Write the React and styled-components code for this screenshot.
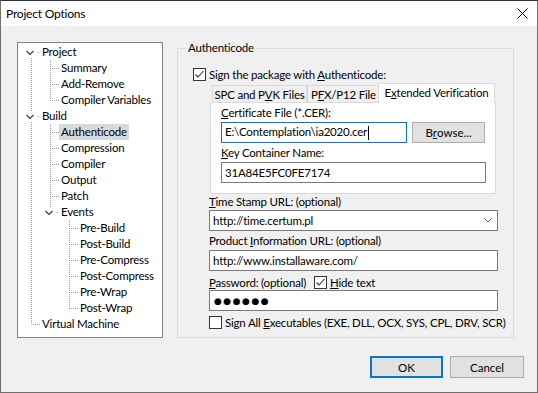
import React from 'react';
import styled, { createGlobalStyle, css } from 'styled-components';

const Global = createGlobalStyle`
  html, body { margin: 0; padding: 0; background: #f0f0f0; }
  body { font-family: Lato, "Noto Sans", sans-serif; font-size: 11.5px; letter-spacing: -0.2px; color: #000; }
  * { box-sizing: border-box; }
`;

const Window = styled.div`
  width: 538px;
  height: 393px;
  border: 1px solid #6e6e6e;
  border-top-color: #2f3040;
  background: #f0f0f0;
  display: flex;
  flex-direction: column;
`;

const TitleBar = styled.div`
  height: 25px;
  flex: none;
  background: #fff;
  display: flex;
  align-items: center;
  justify-content: space-between;
  padding: 0 9px 0 5px;
  font-size: 12px;
`;

const Body = styled.div`
  flex: 1;
  display: flex;
  flex-direction: column;
  padding: 14px 13px 14px 16px;
`;

const TopRow = styled.div`
  display: flex;
  align-items: flex-start;
  gap: 14px;
`;

/* ---------- tree ---------- */
const Tree = styled.div`
  margin-top: 2px;
  width: 146px;
  height: 296px;
  background: #fff;
  border: 1px solid #828282;
  padding-top: 1px;
`;

const TreeRow = styled.div`
  height: 16px;
  display: flex;
  align-items: center;
  padding-left: 3px;
`;

const dotsV = 'repeating-linear-gradient(to bottom, #a0a0a0 0 1px, transparent 1px 2px)';
const dotsH = 'repeating-linear-gradient(to right, #a0a0a0 0 1px, transparent 1px 2px)';

const Guide = styled.span`
  position: relative;
  flex: none;
  width: 19px;
  height: 16px;
  &::before {
    content: '';
    position: absolute;
    left: 10px;
    width: 1px;
    background: ${dotsV};
    ${({ $kind }) => {
      switch ($kind) {
        case 'I':
        case 'T':
        case 'cm':
          return css`top: 0; bottom: 0;`;
        case 'L':
        case 'ce':
          return css`top: 0; height: 9px;`;
        case 'cs':
          return css`top: 8px; bottom: 0;`;
        default:
          return css`display: none;`;
      }
    }}
  }
  &::after {
    content: '';
    position: absolute;
    top: 8px;
    height: 1px;
    background: ${dotsH};
    ${({ $kind }) => {
      switch ($kind) {
        case 'T':
        case 'L':
          return css`left: 10px; width: 9px;`;
        case 'cs':
        case 'cm':
        case 'ce':
          return css`left: 17px; width: 1px;`;
        default:
          return css`display: none;`;
      }
    }}
  }
`;

const ChevronIcon = styled.svg`
  position: absolute;
  left: 4px;
  top: 4px;
  z-index: 1;
`;

const TreeLabel = styled.span`
  height: 16px;
  line-height: 16px;
  padding: 0 2px;
  white-space: nowrap;
  color: #000;
  background: ${({ $selected }) => ($selected ? '#d9d9d9' : 'transparent')};
`;

const treeRows = [
  { g: ['cs'], t: 'Project' },
  { g: ['I', 'T'], t: 'Summary' },
  { g: ['I', 'T'], t: 'Add-Remove' },
  { g: ['I', 'L'], t: 'Compiler Variables' },
  { g: ['cm'], t: 'Build' },
  { g: ['I', 'T'], t: 'Authenticode', sel: true },
  { g: ['I', 'T'], t: 'Compression' },
  { g: ['I', 'T'], t: 'Compiler' },
  { g: ['I', 'T'], t: 'Output' },
  { g: ['I', 'T'], t: 'Patch' },
  { g: ['I', 'ce'], t: 'Events' },
  { g: ['I', ' ', 'T'], t: 'Pre-Build' },
  { g: ['I', ' ', 'T'], t: 'Post-Build' },
  { g: ['I', ' ', 'T'], t: 'Pre-Compress' },
  { g: ['I', ' ', 'T'], t: 'Post-Compress' },
  { g: ['I', ' ', 'T'], t: 'Pre-Wrap' },
  { g: ['I', ' ', 'L'], t: 'Post-Wrap' },
  { g: ['L'], t: 'Virtual Machine' },
];

const Chevron = () => (
  <ChevronIcon width="10" height="9" viewBox="0 0 10 9">
    <rect x="0" y="0" width="10" height="9" fill="#fff" />
    <polyline points="1.5,3 5,6.5 8.5,3" fill="none" stroke="#3c3c3c" strokeWidth="1.2" />
  </ChevronIcon>
);

/* ---------- group ---------- */
const Group = styled.fieldset`
  margin: 0;
  padding: 0;
  min-width: 0;
  width: 337px;
  border: 1px solid #dcdcdc;
`;

const Legend = styled.legend`
  margin-left: 8px;
  padding: 0 2px;
  line-height: 16px;
`;

const GroupBody = styled.div`
  padding: 10px 0 7px 15px;
`;

const CheckRow = styled.div`
  display: flex;
  align-items: center;
  height: 16px;
  gap: 3px;
  margin-top: ${({ $mt }) => $mt || 0}px;
  white-space: nowrap;
`;

const Box = styled.span`
  flex: none;
  width: 13px;
  height: 13px;
  border: 1px solid #333;
  background: #fff;
  display: inline-flex;
  align-items: center;
  justify-content: center;
`;

const CheckBox = ({ checked }) => (
  <Box>
    {checked && (
      <svg width="11" height="11" viewBox="0 0 11 11">
        <polyline points="1.5,5.5 4,8 9.5,2" fill="none" stroke="#333" strokeWidth="1.1" />
      </svg>
    )}
  </Box>
);

const Fields = styled.div`
  margin-left: 16px;
  width: 289px;
  display: flex;
  flex-direction: column;
`;

const TabControl = styled.div`
  margin-top: 1px;
  margin-left: 1px;
  width: 286px;
`;

const TabStrip = styled.div`
  display: flex;
  align-items: flex-end;
  height: 20px;
  padding-left: 2px;
`;

const Tab = styled.div`
  flex: none;
  width: ${({ $w }) => $w}px;
  height: ${({ $active }) => ($active ? 20 : 18)}px;
  margin-left: ${({ $active }) => ($active ? -2 : 0)}px;
  border: 1px solid #d9d9d9;
  border-bottom: none;
  background: ${({ $active }) => ($active ? '#fff' : '#f0f0f0')};
  position: relative;
  z-index: ${({ $active }) => ($active ? 2 : 0)};
  display: flex;
  align-items: center;
  justify-content: center;
  white-space: nowrap;
  padding-bottom: ${({ $active }) => ($active ? 2 : 0)}px;
`;

const TabPanel = styled.div`
  position: relative;
  z-index: 1;
  margin-top: -1px;
  height: 92px;
  border: 1px solid #d9d9d9;
  background: #fff;
  padding: 2px 9px 10px 10px;
  display: flex;
  flex-direction: column;
`;

const FieldLabel = styled.div`
  height: 16px;
  line-height: 16px;
  margin-top: ${({ $mt }) => $mt || 0}px;
  margin-bottom: ${({ $mb }) => $mb || 0}px;
  white-space: nowrap;
`;

const InputRow = styled.div`
  display: flex;
  gap: 5px;
`;

const TextBox = styled.div`
  height: 21px;
  width: ${({ $w }) => ($w ? `${$w}px` : '100%')};
  flex: none;
  border: 1px solid ${({ $focused }) => ($focused ? '#0078d7' : '#7a7a7a')};
  background: #fff;
  display: flex;
  align-items: center;
  justify-content: space-between;
  padding: 0 5px 0 3px;
  white-space: nowrap;
  overflow: hidden;
`;

const Caret = styled.span`
  display: inline-block;
  width: 1px;
  height: 14px;
  background: #000;
  margin-left: 1px;
  vertical-align: middle;
`;

const Dots = styled.span`
  font-family: "DejaVu Sans", sans-serif;
  font-size: 9px;
  letter-spacing: 1.5px;
  margin-left: 1px;
`;

const Button = styled.button`
  font: inherit;
  color: #000;
  height: ${({ $h }) => $h || 22}px;
  width: ${({ $w }) => $w}px;
  background: #e1e1e1;
  border: ${({ $primary }) => ($primary ? '2px solid #0078d7' : '1px solid #adadad')};
  padding: 0;
  flex: none;
  display: flex;
  align-items: center;
  justify-content: center;
`;

const U = styled.u`
  text-decoration-thickness: 1px;
  text-underline-offset: 1px;
`;

const HideLabel = styled.span`
  margin-right: 5px;
`;

const ButtonRow = styled.div`
  margin-top: 18px;
  display: flex;
  justify-content: flex-end;
  gap: 7px;
`;

export default function App() {
  return (
    <>
      <Global />
      <Window>
        <TitleBar>
          <span>Project Options</span>
          <svg width="11" height="11" viewBox="0 0 11 11">
            <path d="M0.5 0.5 L10.5 10.5 M10.5 0.5 L0.5 10.5" stroke="#000" strokeWidth="1" />
          </svg>
        </TitleBar>
        <Body>
          <TopRow>
            <Tree>
              {treeRows.map((r) => (
                <TreeRow key={r.t}>
                  {r.g.map((k, i) => (
                    <Guide key={i} $kind={k}>
                      {k[0] === 'c' && <Chevron />}
                    </Guide>
                  ))}
                  <TreeLabel $selected={r.sel}>{r.t}</TreeLabel>
                </TreeRow>
              ))}
            </Tree>
            <Group>
              <Legend>Authenticode</Legend>
              <GroupBody>
                <CheckRow>
                  <CheckBox checked />
                  <span>
                    Sign the package with <U>A</U>uthenticode:
                  </span>
                </CheckRow>
                <Fields>
                  <TabControl>
                    <TabStrip>
                      <Tab $w={95}>SPC and P<U>V</U>K Files</Tab>
                      <Tab $w={73}>P<U>F</U>X/P12 File</Tab>
                      <Tab $w={117} $active>
                        E<U>x</U>tended Verification
                      </Tab>
                    </TabStrip>
                    <TabPanel>
                      <FieldLabel $mb={1}>
                        <U>C</U>ertificate File (*.CER):
                      </FieldLabel>
                      <InputRow>
                        <TextBox $w={186} $focused>
                          <span>
                            E:\Contemplation\ia2020.cer
                            <Caret />
                          </span>
                        </TextBox>
                        <Button $w={73} $h={21}>
                          B<U>r</U>owse...
                        </Button>
                      </InputRow>
                      <FieldLabel $mt={2} $mb={1}>
                        <U>K</U>ey Container Name:
                      </FieldLabel>
                      <TextBox $w={265}>
                        <span>31A84E5FC0FE7174</span>
                      </TextBox>
                    </TabPanel>
                  </TabControl>
                  <FieldLabel>
                    <U>T</U>ime Stamp URL: (optional)
                  </FieldLabel>
                  <TextBox>
                    <span>http://time.certum.pl</span>
                    <svg width="8" height="5" viewBox="0 0 8 5">
                      <polyline points="0.5,0.5 4,4 7.5,0.5" fill="none" stroke="#555" strokeWidth="1" />
                    </svg>
                  </TextBox>
                  <FieldLabel $mt={2} $mb={1}>
                    Product <U>I</U>nformation URL: (optional)
                  </FieldLabel>
                  <TextBox>
                    <span>http://www.installaware.com/</span>
                  </TextBox>
                  <CheckRow $mt={3}>
                    <HideLabel>
                      <U>P</U>assword: (optional)
                    </HideLabel>
                    <CheckBox checked />
                    <span>
                      <U>H</U>ide text
                    </span>
                  </CheckRow>
                  <TextBox>
                    <Dots>●●●●●●</Dots>
                  </TextBox>
                  <CheckRow $mt={3}>
                    <CheckBox />
                    <span>
                      Sign All <U>E</U>xecutables (EXE, DLL, OCX, SYS, CPL, DRV, SCR)
                    </span>
                  </CheckRow>
                </Fields>
              </GroupBody>
            </Group>
          </TopRow>
          <ButtonRow>
            <Button $w={73} $primary>OK</Button>
            <Button $w={74}>Cancel</Button>
          </ButtonRow>
        </Body>
      </Window>
    </>
  );
}
